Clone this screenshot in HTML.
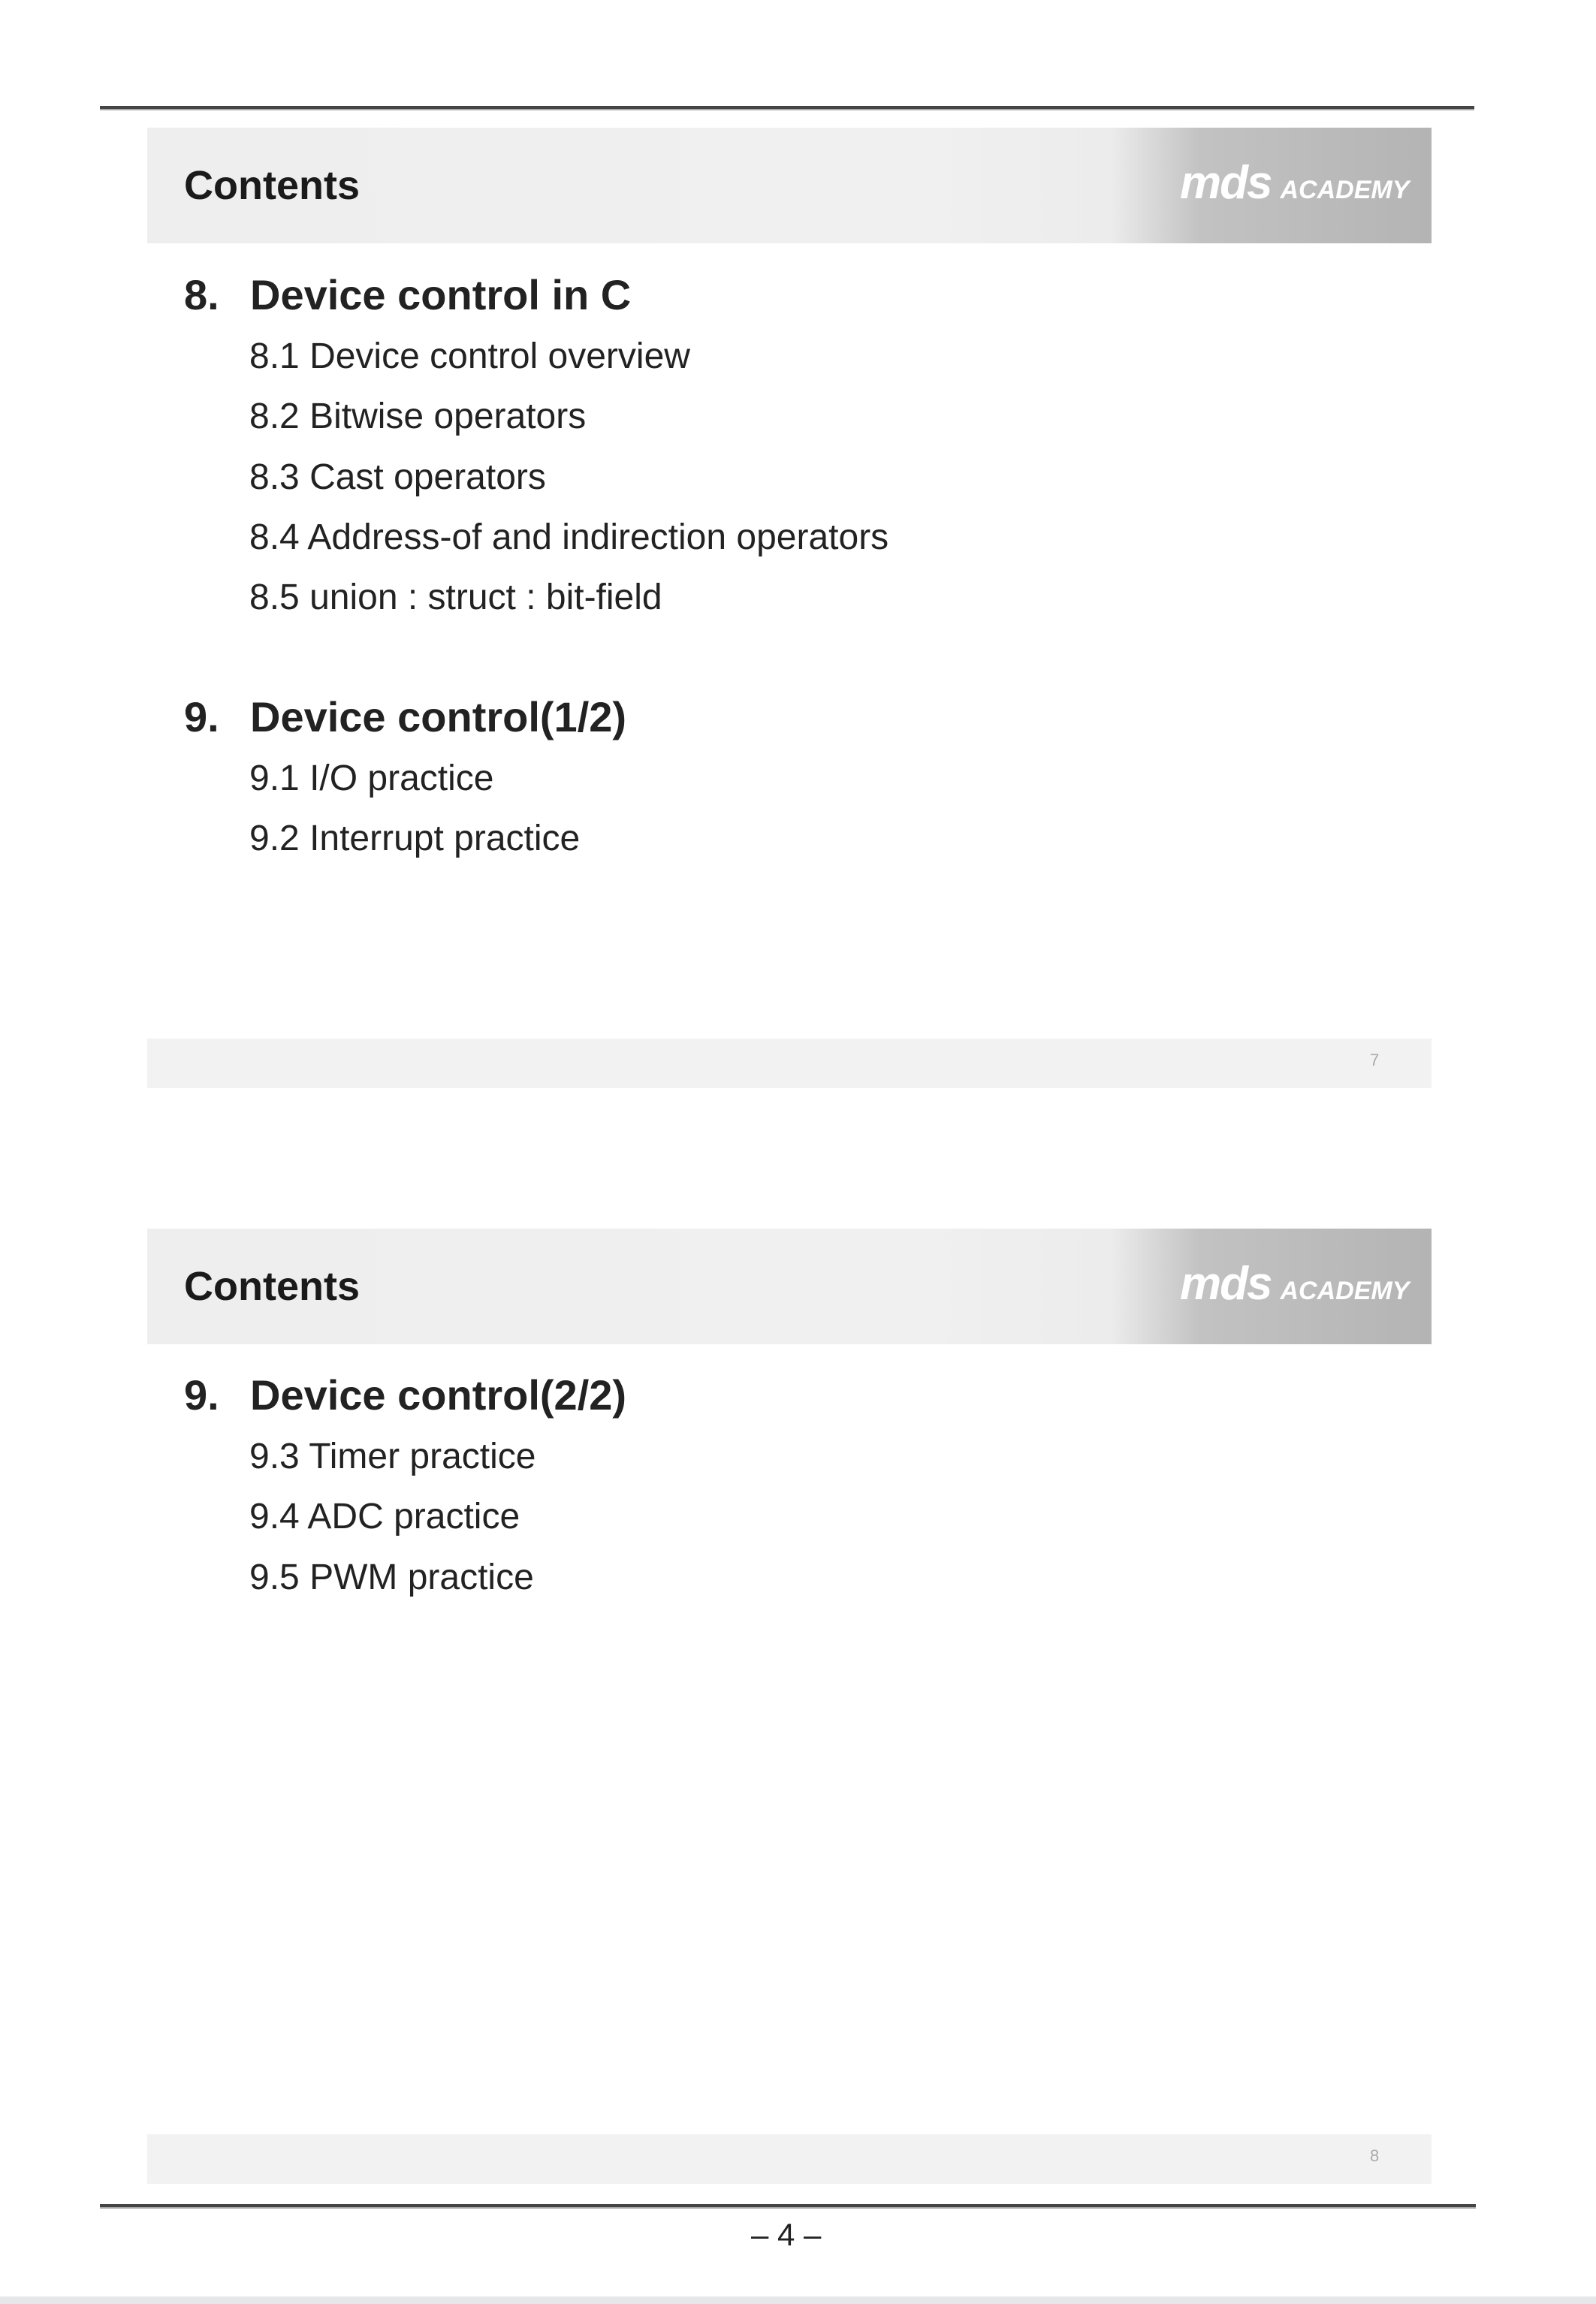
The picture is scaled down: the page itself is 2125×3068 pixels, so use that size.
<!DOCTYPE html>
<html><head><meta charset="utf-8"><style>
html,body{margin:0;padding:0}
body{width:2125px;height:3068px;position:relative;background:#fff;overflow:hidden;font-family:"Liberation Sans",sans-serif;color:#1e1e1e}
.a{position:absolute;white-space:nowrap}
.line{position:absolute;height:4px;background:#444;border-bottom:2px solid #aaa}
.hdr{position:absolute;left:196px;width:1710px;height:154px;background:linear-gradient(90deg,#eeeeee 0%,#f0f0f0 60%,#ececec 75%,#c2c2c2 82%,#b4b4b4 100%)}
.hdr .t{position:absolute;left:49px;top:46px;font-size:54px;font-weight:bold;color:#1a1a1a}
.hdr .logo{position:absolute;left:1375px;top:38px;color:#fff;font-style:italic;font-weight:bold;font-size:62px;letter-spacing:-2px}
.hdr .logo span{font-size:34px;letter-spacing:0;margin-left:12px}
.ftr{position:absolute;left:196px;width:1710px;height:66px;background:#f2f2f2}
.ftr span{position:absolute;left:1628px;top:16px;font-size:22px;color:#aaa}
.h{font-size:56px;font-weight:bold;color:#222}
.h b{display:inline-block;width:88px}
.s{font-size:48px;color:#222}
</style></head><body>
<div class="line" style="left:133px;width:1830px;top:141px"></div>
<div class="hdr" style="top:170px"><div class="t">Contents</div><div class="logo">mds<span>ACADEMY</span></div></div>
<div class="a h" style="left:245px;top:360px"><b>8.</b>Device control in C</div>
<div class="a s" style="left:332px;top:447px">8.1 Device control overview</div>
<div class="a s" style="left:332px;top:527px">8.2 Bitwise operators</div>
<div class="a s" style="left:332px;top:608px">8.3 Cast operators</div>
<div class="a s" style="left:332px;top:688px">8.4 Address-of and indirection operators</div>
<div class="a s" style="left:332px;top:768px">8.5 union : struct : bit-field</div>
<div class="a h" style="left:245px;top:922px"><b>9.</b>Device control(1/2)</div>
<div class="a s" style="left:332px;top:1009px">9.1 I/O practice</div>
<div class="a s" style="left:332px;top:1089px">9.2 Interrupt practice</div>
<div class="ftr" style="top:1383px"><span>7</span></div>
<div class="hdr" style="top:1636px"><div class="t">Contents</div><div class="logo">mds<span>ACADEMY</span></div></div>
<div class="a h" style="left:245px;top:1825px"><b>9.</b>Device control(2/2)</div>
<div class="a s" style="left:332px;top:1912px">9.3 Timer practice</div>
<div class="a s" style="left:332px;top:1992px">9.4 ADC practice</div>
<div class="a s" style="left:332px;top:2073px">9.5 PWM practice</div>
<div class="ftr" style="top:2842px"><span>8</span></div>
<div class="line" style="left:133px;width:1832px;top:2935px"></div>
<div class="a" style="left:1000px;top:2952px;font-size:42px;color:#222">– 4 –</div>
<div style="position:absolute;left:0;top:3058px;width:2125px;height:10px;background:#e4e8ea"></div>
</body></html>
